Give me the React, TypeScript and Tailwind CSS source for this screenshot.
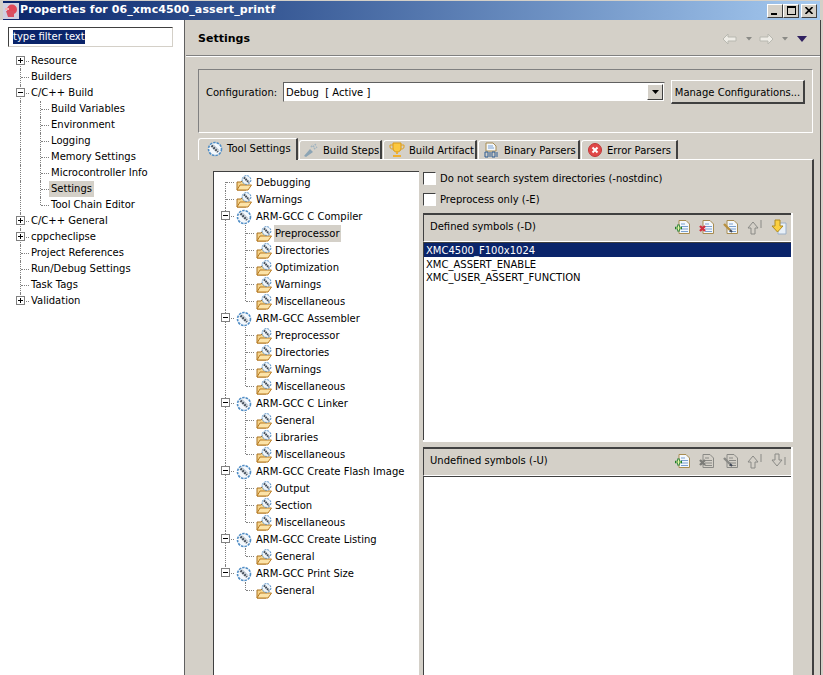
import React from "react";

const Tool = () => (
  <svg width="16" height="16" viewBox="0 0 16 16" className="shrink-0">
    <circle cx="8" cy="8" r="6.5" fill="#f4f8fc" stroke="#4f8cc4" strokeWidth="1.6" strokeDasharray="2.5 1" />
    <path d="M4.5 4.5 L11 11" stroke="#4a5460" strokeWidth="2.4" strokeDasharray="2 0.7" />
    <path d="M6 3.5 L12 9.5" stroke="#a8b4c0" strokeWidth="1" />
  </svg>
);

const ToolFolder = () => (
  <svg width="16" height="16" viewBox="0 0 16 16" className="shrink-0">
    <path d="M1 15 V7 H5 L6 6 H10 V15 Z" fill="#f6d48c" stroke="#a8701e" />
    <path d="M1 15 L4 10 H15.5 L12 15 Z" fill="#fce3a8" stroke="#b87a20" />
    <circle cx="10.5" cy="5" r="4.4" fill="#eef4fa" stroke="#4f8cc4" strokeDasharray="2 1" />
    <path d="M8 2.5 L13 7.5" stroke="#3e4854" strokeWidth="2" strokeDasharray="1.6 0.6" />
  </svg>
);

const Expander = ({ open }: { open: boolean }) => (
  <div className="absolute left-[6px] top-[3px] z-10 flex h-[9px] w-[9px] items-center justify-center border border-[#808080] bg-white">
    <div className="relative h-[5px] w-[5px]">
      <div className="absolute left-0 top-[2px] h-px w-[5px] bg-black" />
      {!open && <div className="absolute left-[2px] top-0 h-[5px] w-px bg-black" />}
    </div>
  </div>
);

// one indent cell of a tree, holds the dotted connector lines
const Guide = ({ kind }: { kind: "pass" | "first" | "mid" | "last" | "none" }) => (
  <div className="relative h-full w-5 shrink-0">
    {kind === "pass" && <div className="absolute bottom-0 left-[10px] top-0 border-l border-dotted border-[#808080]" />}
    {kind === "mid" && <div className="absolute bottom-0 left-[10px] top-0 border-l border-dotted border-[#808080]" />}
    {kind === "first" && <div className="absolute bottom-0 left-[10px] top-[8px] border-l border-dotted border-[#808080]" />}
    {kind === "last" && <div className="absolute left-[10px] top-0 h-[8px] border-l border-dotted border-[#808080]" />}
    {kind !== "pass" && kind !== "none" && (
      <div className="absolute left-[11px] top-[8px] w-[8px] border-t border-dotted border-[#808080]" />
    )}
  </div>
);

type Pos = "first" | "mid" | "last";
type LeftItem = { label: string; pos: Pos; exp?: boolean; open?: boolean; child?: boolean; sel?: boolean };

const leftItems: LeftItem[] = [
  { label: "Resource", pos: "first", exp: true },
  { label: "Builders", pos: "mid" },
  { label: "C/C++ Build", pos: "mid", exp: true, open: true },
  { label: "Build Variables", pos: "mid", child: true },
  { label: "Environment", pos: "mid", child: true },
  { label: "Logging", pos: "mid", child: true },
  { label: "Memory Settings", pos: "mid", child: true },
  { label: "Microcontroller Info", pos: "mid", child: true },
  { label: "Settings", pos: "mid", child: true, sel: true },
  { label: "Tool Chain Editor", pos: "last", child: true },
  { label: "C/C++ General", pos: "mid", exp: true },
  { label: "cppcheclipse", pos: "mid", exp: true },
  { label: "Project References", pos: "mid" },
  { label: "Run/Debug Settings", pos: "mid" },
  { label: "Task Tags", pos: "mid" },
  { label: "Validation", pos: "last", exp: true },
];

const LeftTree = () => (
  <div className="mt-[6px] pl-[10px]">
    {leftItems.map((it) => (
      <div key={it.label} className="flex h-4 items-center">
        {it.child && <Guide kind="pass" />}
        <div className="relative h-full w-[19px] shrink-0">
          <Guide kind={it.pos} />
          {it.exp && <Expander open={!!it.open} />}
        </div>
        <span className={`px-[2px] leading-4 ${it.sel ? "bg-[#d4d0c8]" : ""}`}>{it.label}</span>
      </div>
    ))}
  </div>
);

type RightItem = { label: string; level: 0 | 1; pos: Pos; open?: boolean };

const group = (label: string, kids: string[], last = false): RightItem[] => [
  { label, level: 0, pos: last ? "last" : "mid", open: true },
  ...kids.map((k, i) => ({
    label: k,
    level: 1 as const,
    pos: (i === kids.length - 1 ? "last" : "mid") as Pos,
  })),
];

const rightItems: RightItem[] = [
  { label: "Debugging", level: 0, pos: "first" },
  { label: "Warnings", level: 0, pos: "mid" },
  ...group("ARM-GCC C Compiler", ["Preprocessor", "Directories", "Optimization", "Warnings", "Miscellaneous"]),
  ...group("ARM-GCC Assembler", ["Preprocessor", "Directories", "Warnings", "Miscellaneous"]),
  ...group("ARM-GCC C Linker", ["General", "Libraries", "Miscellaneous"]),
  ...group("ARM-GCC Create Flash Image", ["Output", "Section", "Miscellaneous"]),
  ...group("ARM-GCC Create Listing", ["General"]),
  ...group("ARM-GCC Print Size", ["General"], true),
];

const RightTree = () => (
  <div className="min-h-0 w-[206px] shrink-0 overflow-hidden border-l border-t border-[#404040] bg-white pl-[1px] pt-[2px]">
    {rightItems.map((it, idx) => {
      const sel = idx === 3;
      // the last group has no trunk under it
      const passTrunk = idx < rightItems.length - 1;
      return (
        <div key={idx} className="flex h-[17px] items-center">
          {it.level === 1 && <Guide kind={passTrunk ? "pass" : "none"} />}
          <div className="relative h-full w-5 shrink-0">
            <Guide kind={it.pos} />
            {it.open && <Expander open />}
          </div>
          <div className={`ml-[1px] ${it.level === 0 ? "mr-[3px]" : "mr-[2px]"}`}>
            {it.level === 1 || idx < 2 ? <ToolFolder /> : <Tool />}
          </div>
          <span className={`px-[1px] leading-[17px] ${sel ? "bg-[#d4d0c8]" : ""}`}>{it.label}</span>
        </div>
      );
    })}
  </div>
);

const Doc = ({ gray, children }: { gray?: boolean; children?: React.ReactNode }) => (
  <svg width="16" height="16" viewBox="0 0 16 16" className="shrink-0">
    <path
      d="M4 1.5 H11 L14.5 5 V14.5 H4 Z"
      fill={gray ? "none" : "#f4f8fc"}
      stroke={gray ? "#8a8a86" : "#a88c50"}
    />
    <path d="M6 5H10 M6 7.5H13 M6 10H13 M6 12.5H13" stroke={gray ? "#8a8a86" : "#7aa0d0"} />
    {children}
  </svg>
);

const ArrowUp = ({ down, active }: { down?: boolean; active?: boolean }) => (
  <svg width="16" height="16" viewBox="0 0 16 16" className="shrink-0">
    {active ? (
      <>
        <path d="M7 4H15V15H7Z" fill="#e8f0f8" stroke="#9cb0c8" />
        <path d="M4 1H9V7H12L6.5 13L1 7H4Z" fill="#fbd040" stroke="#b08a20" />
      </>
    ) : (
      <>
        <path
          d={down ? "M4 1H8V7H11L6 13L1 7H4Z" : "M6 3L11 9H8V15H4V9H1Z"}
          fill="none"
          stroke="#8a8a86"
        />
        <path d={down ? "M14 4V12" : "M14 1V9"} stroke="#8a8a86" />
      </>
    )}
  </svg>
);

const SymbolToolbar = ({ title, enabled }: { title: string; enabled: boolean }) => (
  <div className="flex h-[29px] shrink-0 items-center border-b border-l border-t-2 border-b-white border-l-[#404040] border-t-[#404040] bg-[#d4d0c8] pb-[3px] pl-[6px] pr-[4px]">
    <span className="flex-1">{title}</span>
    <div className="flex items-center gap-[8px]">
      <Doc>
        <path d="M0 9H7 M3.5 5.5V12.5" stroke="#1c7a2c" strokeWidth="2.4" />
        <path d="M1 9H6 M3.5 6.5V11.5" stroke="#e4f4a0" strokeWidth="1" />
      </Doc>
      <Doc gray={!enabled}>
        <path d="M1 7L6 12 M6 7L1 12" stroke={enabled ? "#d03040" : "#7c7c78"} strokeWidth="2.4" />
      </Doc>
      <Doc gray={!enabled}>
        <path d="M1 5L7 11" stroke={enabled ? "#b89040" : "#8a8a86"} strokeWidth="2.4" />
        <path d="M7 11L9 13" stroke="#404858" strokeWidth="2" />
      </Doc>
      <ArrowUp />
      <ArrowUp down={!enabled} active={enabled} />
    </div>
  </div>
);

const Check = ({ label }: { label: string }) => (
  <div className="flex h-[15px] items-center gap-[4px]">
    <div className="h-[13px] w-[13px] border border-b-white border-l-[#404040] border-r-white border-t-[#404040] bg-white" />
    <span>{label}</span>
  </div>
);

const TabLabel = ({ icon, label }: { icon: React.ReactNode; label: string }) => (
  <div className="flex items-center gap-[4px]">
    {icon}
    <span className="whitespace-nowrap">{label}</span>
  </div>
);

const tabs = [
  {
    box: "w-[83px] pl-[3px]",
    label: "Build Steps",
    icon: (
      <svg width="16" height="16" viewBox="0 0 16 16">
        <path d="M1 14L7 7L10 10L3 15Z" fill="#8ca4b4" />
        <path d="M8 5L10 3M11 7L14 5M10 5L13 2" stroke="#a0b4c0" strokeWidth="1.6" strokeDasharray="1.5 1" />
      </svg>
    ),
  },
  {
    box: "w-[94px] pl-[5px]",
    label: "Build Artifact",
    icon: (
      <svg width="16" height="16" viewBox="0 0 16 16">
        <path d="M4 1H12V6C12 9 10 10 8 10C6 10 4 9 4 6Z" fill="#fcc840" stroke="#d89818" />
        <path d="M4 3H1V5C1 7 3 7 4 7M12 3H15V5C15 7 13 7 12 7" fill="none" stroke="#e0a020" />
        <path d="M7 10H9V12H7ZM4 13H12V15H4Z" fill="#f0b030" />
      </svg>
    ),
  },
  {
    box: "w-[102px] pl-[5px]",
    label: "Binary Parsers",
    icon: (
      <svg width="16" height="16" viewBox="0 0 16 16">
        <path d="M2 1H9L12 4V9H2Z" fill="#f4f8fc" stroke="#a88c50" />
        <path d="M4 4H9M4 6H10" stroke="#7aa0d0" />
        <path d="M1 10H4V15H1ZM8 10H11V15H8ZM6 10V15M13 10V15" fill="none" stroke="#2c5a90" />
      </svg>
    ),
  },
  {
    box: "w-[97px] pl-[5px]",
    label: "Error Parsers",
    icon: (
      <svg width="16" height="16" viewBox="0 0 16 16">
        <circle cx="8" cy="8" r="6.5" fill="#e04848" stroke="#c03838" />
        <path d="M5.5 5.5L10.5 10.5M10.5 5.5L5.5 10.5" stroke="#fff" strokeWidth="2" />
      </svg>
    ),
  },
];

const TabBar = () => (
  <div className="flex h-[21px] shrink-0 items-end">
    <div className="z-10 -mb-px flex h-[22px] w-[100px] shrink-0 items-center rounded-tl-[3px] border-l border-r-2 border-t border-l-white border-r-[#404040] border-t-white bg-[#d4d0c8] pb-[2px] pl-[8px]">
      <TabLabel icon={<Tool />} label="Tool Settings" />
    </div>
    {tabs.map((t) => (
      <div
        key={t.label}
        className={`ml-[1px] flex h-[19px] shrink-0 ${t.box} items-center rounded-tl-[3px] border-l border-r-2 border-t border-l-white border-r-[#404040] border-t-white`}
      >
        <TabLabel icon={t.icon} label={t.label} />
      </div>
    ))}
  </div>
);

export default function App() {
  return (
    <div className="flex h-[675px] w-[823px] flex-col overflow-hidden bg-[#d4d0c8] font-['DejaVu_Sans',sans-serif] text-[10px] text-black">
      <div className="mx-[3px] mt-px flex h-[19px] shrink-0 items-center bg-gradient-to-r from-[#0a246a] to-[#a6caf0] pr-[3px]">
        <svg width="16" height="16" viewBox="0 0 16 16" className="shrink-0">
          <rect width="16" height="16" fill="#d0d0e0" />
          <circle cx="9" cy="6.5" r="5" fill="#e04858" />
          <path d="M3 8H11V14H5Z" fill="#d85060" />
          <path d="M2 5H6V7H2Z" fill="#f8b0b0" />
        </svg>
        <span className="ml-[1px] flex-1 text-[11px] font-bold tracking-[0.1px] text-white">
          Properties for 06_xmc4500_assert_printf
        </span>
        <div className="flex">
          {["min", "max", "close"].map((b) => (
            <div
              key={b}
              className={`relative flex h-[14px] w-4 items-center justify-center border border-b-[#404040] border-l-white border-r-[#404040] border-t-white bg-[#d4d0c8] ${
                b === "close" ? "ml-[2px]" : ""
              }`}
            >
              {b === "min" && <div className="mr-[2px] mt-[7px] h-[2px] w-[6px] bg-black" />}
              {b === "max" && <div className="h-[9px] w-[9px] border border-t-2 border-black" />}
              {b === "close" && (
                <svg width="8" height="7" viewBox="0 0 8 7">
                  <path d="M0.5 0L7.5 7M7.5 0L0.5 7" stroke="#000" strokeWidth="1.6" />
                </svg>
              )}
            </div>
          ))}
        </div>
      </div>

      <div className="flex min-h-0 flex-1">
        <div className="w-[184px] shrink-0 bg-white pt-[7px]">
          <div className="ml-[8px] flex h-[20px] w-[165px] items-center border border-b-[#d4d0c8] border-l-[#404040] border-r-[#d4d0c8] border-t-[#404040] pl-[4px]">
            <span className="bg-[#0a246a] leading-[14px] text-white">type filter text</span>
          </div>
          <LeftTree />
        </div>
        <div className="w-px shrink-0 bg-[#606060]" />

        <div className="flex min-w-0 flex-1 flex-col pl-[1px]">
          <div className="flex h-[36px] shrink-0 items-center border-b border-[#808080] pl-[12px] pr-[13px] pt-[2px]">
            <span className="mt-[2px] flex-1 text-[11px] font-bold">Settings</span>
            <div className="flex items-center">
              <svg width="16" height="12" viewBox="0 0 16 12">
                <path d="M6 1L1 6L6 11V8H14V4H6Z" fill="#eeece6" stroke="#b8b8b0" />
              </svg>
              <svg width="6" height="4" viewBox="0 0 6 4" className="ml-[8px]">
                <path d="M0 0H6L3 3.5Z" fill="#8a8a86" />
              </svg>
              <svg width="16" height="12" viewBox="0 0 16 12" className="ml-[6px]">
                <path d="M10 1L15 6L10 11V8H2V4H10Z" fill="#eeece6" stroke="#b8b8b0" />
              </svg>
              <svg width="6" height="4" viewBox="0 0 6 4" className="ml-[8px]">
                <path d="M0 0H6L3 3.5Z" fill="#8a8a86" />
              </svg>
              <svg width="10" height="6" viewBox="0 0 10 6" className="ml-[9px]">
                <path d="M0 0H10L5 6Z" fill="#302060" />
              </svg>
            </div>
          </div>

          <div className="flex min-h-0 flex-1 flex-col border-t border-white pl-[12px] pr-[6px] pt-[12px]">
            <div className="mr-[1px] flex h-[64px] shrink-0 items-start border border-[#808080] border-b-white border-r-white pl-[7px] pr-[7px] pt-[10px]">
              <span className="h-[24px] w-[77px] shrink-0 pt-px leading-[24px]">Configuration:</span>
              <div className="mt-[2px] flex h-[20px] w-[382px] shrink-0 items-center justify-between border border-b-[#d4d0c8] border-l-[#606060] border-r-[#d4d0c8] border-t-[#606060] bg-white pl-[2px] pr-px">
                <span className="whitespace-pre">Debug  [ Active ]</span>
                <div className="flex h-[16px] w-[16px] items-center justify-center border border-b-[#404040] border-l-white border-r-[#404040] border-t-white bg-[#d4d0c8]">
                  <svg width="7" height="4" viewBox="0 0 7 4">
                    <path d="M0 0H7L3.5 4Z" fill="#000" />
                  </svg>
                </div>
              </div>
              <div className="ml-[6px] flex h-[24px] w-[134px] shrink-0 items-center justify-center border border-b-2 border-r-2 border-b-[#404040] border-l-white border-r-[#404040] border-t-white pt-px">
                Manage Configurations...
              </div>
            </div>

            <div className="mt-[5px] flex min-h-0 flex-1 flex-col">
              <TabBar />
              <div className="flex min-h-0 flex-1 border-r-2 border-t border-r-[#404040] border-t-white pl-[15px] pt-[11px]">
                <RightTree />
                <div className="ml-[4px] flex min-h-0 w-[370px] shrink-0 flex-col">
                  <Check label="Do not search system directories (-nostdinc)" />
                  <div className="mt-[6px]">
                    <Check label="Preprocess only (-E)" />
                  </div>
                  <div className="mt-[6px] flex h-[229px] shrink-0 flex-col border-b-2 border-r-2 border-white">
                    <SymbolToolbar title="Defined symbols (-D)" enabled />
                    <div className="flex-1 border-l border-t border-[#404040] bg-white">
                      <div className="h-[14px] bg-[#0a246a] pl-[2px] leading-[16px] text-white">XMC4500_F100x1024</div>
                      <div className="h-[14px] pl-[2px] leading-[16px]">XMC_ASSERT_ENABLE</div>
                      <div className="-mt-px h-[14px] pl-[2px] leading-[16px]">XMC_USER_ASSERT_FUNCTION</div>
                    </div>
                  </div>
                  <div className="mt-[5px] flex min-h-0 flex-1 flex-col border-r-2 border-white">
                    <SymbolToolbar title="Undefined symbols (-U)" enabled={false} />
                    <div className="flex-1 border-l border-t border-[#404040] bg-white" />
                  </div>
                </div>
              </div>
            </div>
          </div>
        </div>
        <div className="w-[3px] shrink-0 border-l border-[#404040]" />
      </div>
    </div>
  );
}
